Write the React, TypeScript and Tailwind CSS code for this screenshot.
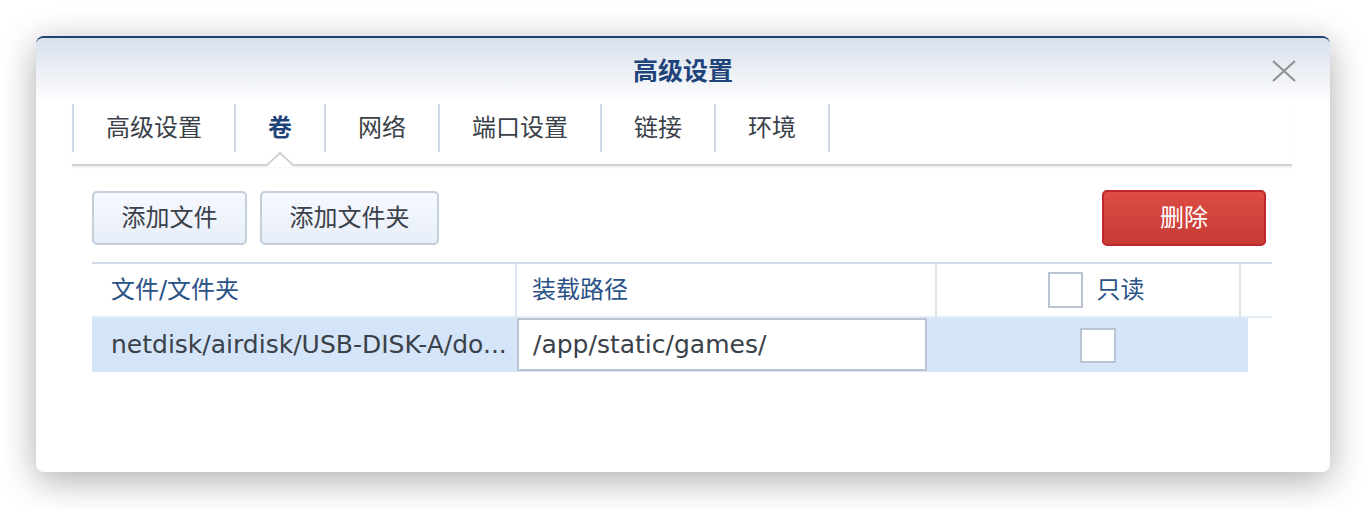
import React from 'react';

const FONT = { fontFamily: '"DejaVu Sans", "Noto Sans CJK SC", sans-serif' };

const tabs = ['高级设置', '卷', '网络', '端口设置', '链接', '环境'];

const Checkbox: React.FC<{ className?: string }> = ({ className = '' }) => (
  <div className={`bg-white border-2 border-[#b9c5d3] ${className}`} />
);

const App: React.FC = () => {
  const active = 1;

  return (
    <div className="h-[508px] w-[1366px] bg-white pl-[36px] pt-[36px] overflow-hidden" style={FONT}>
      <div className="w-[1294px] h-[436px] bg-white rounded-[8px] border-t-2 border-[#213f6f] shadow-[0_8px_36px_rgba(0,0,0,0.33)] overflow-hidden">
        {/* Header */}
        <div className="h-[66px] grid grid-cols-[1fr_auto_1fr] items-center bg-gradient-to-b from-[#d8e0ec] to-white">
          <div />
          <div className="text-[25px] font-bold text-[#1e4479] leading-none">高级设置</div>
          <div className="flex justify-end pr-[34px]">
            <svg width="24" height="22" viewBox="0 0 24 22">
              <path d="M1 1 L23 21 M23 1 L1 21" stroke="#8e8e8e" strokeWidth="2" fill="none" />
            </svg>
          </div>
        </div>

        {/* Tabs */}
        <div className="ml-[36px] mr-[38px] h-[62px] border-b-2 border-[#d2d2d2] shadow-[0_2px_2px_rgba(0,0,0,0.05)]">
          <div className="flex h-[48px]">
            {tabs.map((t, i) => (
              <div
                key={t}
                className={`relative h-[48px] flex items-center px-8 border-r-2 border-[#cfdae8] text-[24px] leading-none ${
                  i === 0 ? 'border-l-2' : ''
                } ${i === active ? 'font-bold text-[#1e4479]' : 'text-[#3b4149]'}`}
              >
                {t}
                {i === active && (
                  <svg
                    className="absolute top-[48px] left-1/2 -translate-x-1/2"
                    width="26"
                    height="15"
                    viewBox="0 0 26 15"
                  >
                    <polygon points="0,15 13,1 26,15" fill="#fff" />
                    <path d="M0 13 L13 1 L26 13" stroke="#d2d2d2" strokeWidth="2" fill="none" />
                  </svg>
                )}
              </div>
            ))}
          </div>
        </div>

        {/* Content */}
        <div className="pl-[56px] pr-[58px]">
          <div className="mt-[24px] h-[56px] flex items-center">
            <button className="w-[155px] h-[54px] rounded-[5px] border-2 border-[#c4cfdc] bg-gradient-to-b from-[#f6f9fe] to-[#e8eef9] text-[24px] text-[#3b4149]">
              添加文件
            </button>
            <button className="ml-[13px] w-[179px] h-[54px] rounded-[5px] border-2 border-[#c4cfdc] bg-gradient-to-b from-[#f6f9fe] to-[#e8eef9] text-[24px] text-[#3b4149]">
              添加文件夹
            </button>
            <div className="flex-1" />
            <button className="mr-[6px] w-[164px] h-[56px] rounded-[5px] border-2 border-[#c0262c] bg-gradient-to-b from-[#dc4c44] to-[#c73a35] text-[24px] text-white">
              删除
            </button>
          </div>

          {/* Table */}
          <div className="mt-[16px]">
            <div className="flex h-[56px] border-t-2 border-b-2 border-t-[#cfdbe9] border-b-[#e3ebf4] text-[24px] text-[#2a5287]">
              <div className="w-[425px] border-r-2 border-[#dde6f0] flex items-center pl-[19px]">文件/文件夹</div>
              <div className="w-[420px] border-r-2 border-[#dde6f0] flex items-center pl-[15px]">装载路径</div>
              <div className="w-[304px] border-r-2 border-[#dde6f0] flex items-center justify-center pl-[16px]">
                <Checkbox className="w-[35px] h-[36px]" />
                <span className="ml-[14px]">只读</span>
              </div>
              <div className="flex-1" />
            </div>

            <div className="flex w-[1156px] h-[54px] bg-[#d5e5f9] text-[25px] text-[#3a4149]">
              <div className="w-[424px] flex items-center pl-[19px] whitespace-nowrap overflow-hidden">
                <span className="overflow-hidden">netdisk/airdisk/USB-DISK-A/do...</span>
              </div>
              <div className="w-[419px] flex">
                <div className="ml-px w-[410px] h-[53px] bg-white border-2 border-[#b9c5d3] flex items-center pl-[14px]">
                  /app/static/games/
                </div>
              </div>
              <div className="flex-1 flex items-center justify-center pl-[12px]">
                <Checkbox className="w-[36px] h-[35px]" />
              </div>
            </div>
          </div>
        </div>
      </div>
    </div>
  );
};

export default App;
